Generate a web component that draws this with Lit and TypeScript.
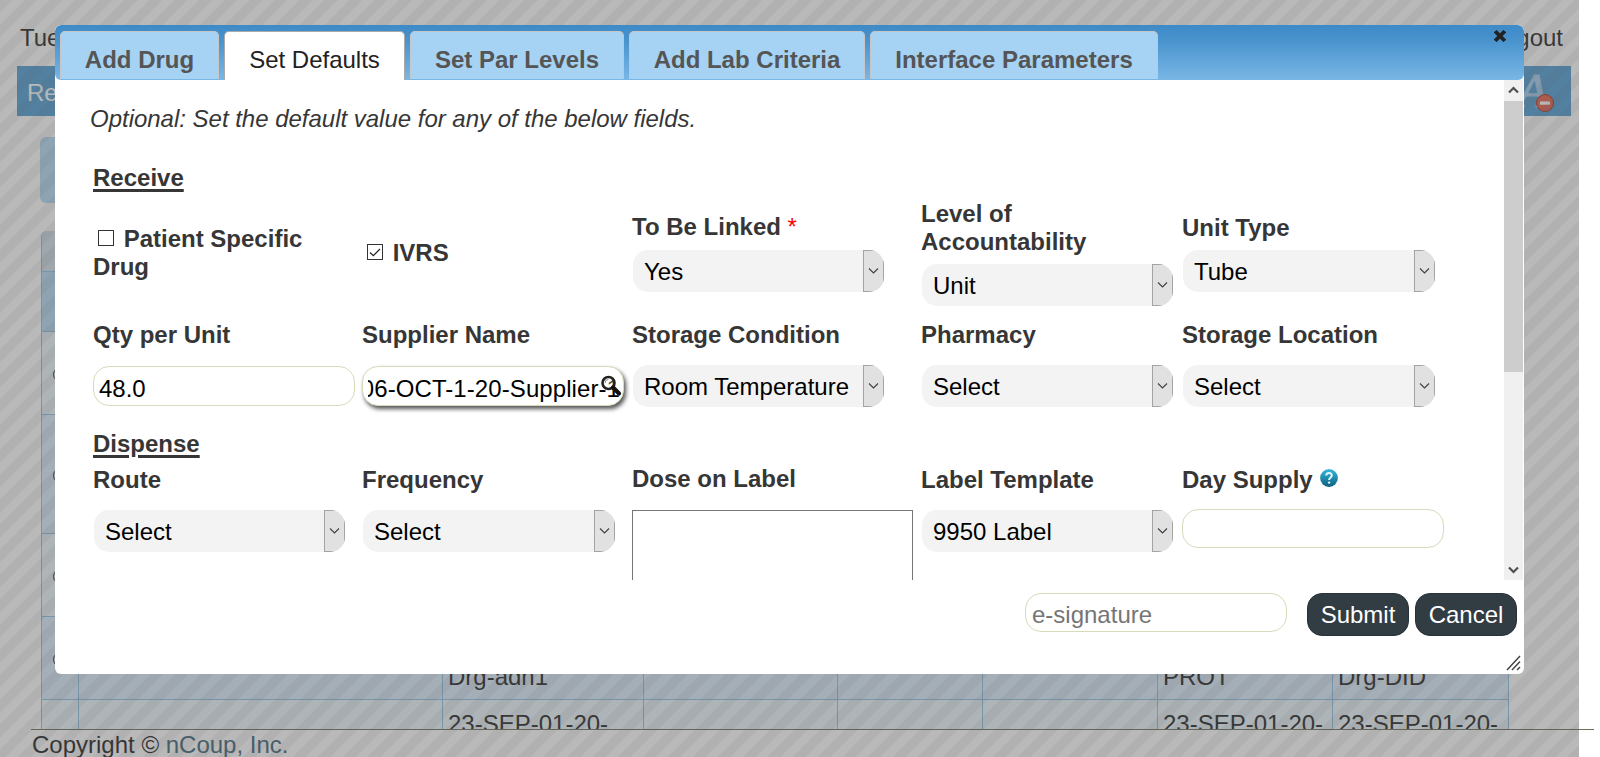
import { LitElement, html, css, svg, nothing } from "lit";
import { customElement, property } from "lit/decorators.js";

type Kind = "select" | "input" | "search" | "area" | "check";

interface Field {
  label: string;
  kind: Kind;
  value?: string;
  cls?: string;
  required?: boolean;
  help?: boolean;
  checked?: boolean;
}

const TABS = [
  { label: "Add Drug", cls: "t1" },
  { label: "Set Defaults", cls: "t2 active" },
  { label: "Set Par Levels", cls: "t3" },
  { label: "Add Lab Criteria", cls: "t4" },
  { label: "Interface Parameters", cls: "t5" },
];

const RECEIVE_TOP: Field[] = [
  { label: "Patient Specific Drug", kind: "check", cls: "patient" },
  { label: "IVRS", kind: "check", checked: true, cls: "ivrs" },
  { label: "To Be Linked", kind: "select", value: "Yes", required: true, cls: "linked" },
  { label: "Level of Accountability", kind: "select", value: "Unit", cls: "level" },
  { label: "Unit Type", kind: "select", value: "Tube", cls: "unit wide" },
];

const RECEIVE_BOTTOM: Field[] = [
  { label: "Qty per Unit", kind: "input", value: "48.0" },
  { label: "Supplier Name", kind: "search", value: "06-OCT-1-20-Supplier-1" },
  { label: "Storage Condition", kind: "select", value: "Room Temperature" },
  { label: "Pharmacy", kind: "select", value: "Select" },
  { label: "Storage Location", kind: "select", value: "Select", cls: "wide" },
];

const DISPENSE: Field[] = [
  { label: "Route", kind: "select", value: "Select" },
  { label: "Frequency", kind: "select", value: "Select", cls: "wide" },
  { label: "Dose on Label", kind: "area", cls: "dose" },
  { label: "Label Template", kind: "select", value: "9950 Label" },
  { label: "Day Supply", kind: "input", value: "", help: true, cls: "supply" },
];

@customElement("form-field")
class FormField extends LitElement {
  @property({ attribute: false }) field!: Field;

  static styles = css`
    :host { display: block; min-width: 0; }
    .label { font-weight: bold; line-height: 28px; color: #363636; }
    .star { color: #f00; font-weight: normal; }
    .control { box-sizing: border-box; margin-top: var(--gap, 16px); color: #000; line-height: 28px; }
    .select {
      display: flex; width: var(--select-width, 251px); height: 42px; margin-left: 1px; border-radius: 15px;
      background: #f3f3f3; overflow: hidden; padding-left: 11px; align-items: center;
      justify-content: space-between; white-space: nowrap;
    }
    .select .text { padding-top: 1px; }
    .drop {
      box-sizing: border-box; width: 21px; height: 42px; border: 1px solid #a3a3a3; flex: none;
      background: #e1e1e1; display: flex; align-items: center; justify-content: center;
    }
    .input {
      width: 262px; height: var(--input-height, 40px); border: 1px solid #d8dabb; border-radius: 16px;
      background: #fff; padding: 8px 6px 0 5px; margin-top: var(--input-gap, 17px);
    }
    .search { position: relative; box-shadow: 2px 3px 4px #555; padding: 8px 5px 0; }
    .clip { display: flex; justify-content: flex-end; overflow: hidden; white-space: nowrap; width: 252px; letter-spacing: .08px; }
    .glass { position: absolute; left: 237px; top: 8px; }
    .area { width: 281px; height: 100px; border: 1px solid #767676; margin-top: 17px; }
    .box { display: inline-block; margin: 0 3px 0 5px; vertical-align: -1px; }
    .box svg, .glass svg, .drop svg { display: block; }
    .box svg { margin-top: -2px; margin-bottom: 2px; }
    .q { vertical-align: 1px; margin-left: 1px; }
  `;

  private renderControl(f: Field) {
    switch (f.kind) {
      case "select":
        return html`<div class="control select">
          <span class="text">${f.value}</span>
          <span class="drop"><svg width="11" height="8" viewBox="0 0 11 8">
            <path d="M1 1.500 5.500 6 10 1.500" fill="none" stroke="#404040" stroke-width="1.100" /></svg></span>
        </div>`;
      case "input":
        return html`<div class="control input">${f.value}</div>`;
      case "search":
        return html`<div class="control input search">
          <div class="clip"><span>${f.value}</span></div>
          <span class="glass"><svg width="22" height="22" viewBox="0 0 22 22">
            <circle cx="8.500" cy="8" r="6" fill="#fff" fill-opacity=".3" stroke="#222" stroke-width="2.600" />
            <path d="M5 8a3.600 3.600 0 0 1 3.500-3.600" fill="none" stroke="#888" />
            <path d="m13 12.500 6 6" stroke="#111" stroke-width="4.200" stroke-linecap="round" /></svg></span>
        </div>`;
      case "area":
        return html`<div class="control area"></div>`;
      default:
        return nothing;
    }
  }

  render() {
    const f = this.field;
    return html`<div class="label">${f.kind === "check"
        ? html`<span class="box"><svg width="16" height="16" viewBox="0 0 16 16">
            <rect x=".5" y=".5" width="15" height="15" fill="#fff" stroke="#333" />
            ${f.checked
              ? svg`<path d="M3 8.500 6.300 11.700 13 5" fill="none" stroke="#222" stroke-width="1.200" />`
              : nothing}</svg></span>&nbsp;`
        : nothing}${f.label}${f.required ? html` <span class="star">*</span>` : nothing}${f.help
        ? html` <svg class="q" width="18" height="18" viewBox="0 0 18 18">
            <defs><linearGradient id="g" x1="0" y1="0" x2="0" y2="1">
              <stop offset="0" stop-color="#35b8dc" /><stop offset="1" stop-color="#0d5f80" /></linearGradient></defs>
            <circle cx="9" cy="9" r="8.900" fill="url(#g)" />
            <path d="M6.200 6.600C6.200 3.300 11.800 3.200 11.800 6.500 11.800 8.700 9.200 8.400 9.100 11" fill="none" stroke="#e4f6fb" stroke-width="2" />
            <circle cx="9.100" cy="13.600" r="1.200" fill="#e4f6fb" /></svg>`
        : nothing}</div>
      ${this.renderControl(f)}`;
  }
}

@customElement("page-behind")
class PageBehind extends LitElement {
  static styles = css`
    :host { display: flex; flex-direction: column; height: 757px; background: #fff; color: #222; overflow: hidden; }
    .top { display: flex; justify-content: space-between; height: 66px; padding: 24px 37px 0 20px; box-sizing: border-box; line-height: 28px; width: 1600px; flex: none; }
    .bar {
      height: 50px; margin: 0 29px 0 17px; background: #519ed4; color: #fff; display: flex; flex: none;
      justify-content: space-between; padding-left: 10px; line-height: 53px; box-sizing: border-box;
    }
    .bar svg { display: block; }
    .actions { height: 66px; flex: none; margin: 21px 90px 0 40px; background: #b7dbf4; border-radius: 6px; }
    .table { margin: 28px 91px 0 41px; flex: 1; min-height: 0; overflow: hidden; border-left: 1px solid #8fc1e4; border-right: 1px solid #8fc1e4; box-sizing: border-box; border-radius: 6px 6px 0 0; }
    .caption { height: 40px; background: #d3e1ea; padding: 7px 0 0 12px; box-sizing: border-box; }
    .head { height: 61px; background: #b7dbf4; border-bottom: 1px solid #8fc1e4; border-top: 1px solid #8fc1e4; box-sizing: border-box; }
    .row { display: grid; grid-template-columns: 37px 364px 201px 194px 145px 175px 175px 1fr; box-sizing: border-box; border-bottom: 1px solid #8fc1e4; background: #ecf7fc; line-height: 28px; }
    .row.alt { background: #dcedfc; }
    .cell { border-right: 1px solid #8fc1e4; box-sizing: border-box; padding-left: 5px; overflow: hidden; display: flex; flex-direction: column; justify-content: flex-end; padding-bottom: 8px; white-space: nowrap; }
    .cell:last-child { border-right: 0; }
    .cell.pick { justify-content: center; padding: 2px 0 0 11px; }
    .last .cell { justify-content: flex-start; padding-top: 10px; }
    .dot { width: 13px; height: 13px; border: 1px solid #222; border-radius: 50%; flex: none; }
    .h83 { height: 83px; } .h119 { height: 119px; }
    .foot { height: 28px; margin-left: 31px; width: 1563px; border-top: 1px solid #6b7058; line-height: 28px; color: #1c1c1c; flex: none; box-sizing: border-box; }
    .foot .copy { display: block; margin: 1px 0 0 1px; }
    .foot a { color: #3d6479; }
  `;

  private row(cls: string, cells: string[]) {
    return html`<div class="row ${cls}">
      <div class="cell pick">${cls.includes("last") ? nothing : html`<span class="dot"></span>`}</div>
      ${cells.map((c) => html`<div class="cell">${c}</div>`)}
    </div>`;
  }

  render() {
    const blank = ["", "", "", "", "", "", ""];
    return html`
      <div class="top"><span>Tue</span><span>gout</span></div>
      <div class="bar"><span>Re</span>
        <svg width="56" height="50" viewBox="0 0 56 50">
          <text x="3" y="40.500" font-family="Liberation Serif, serif" font-style="italic" font-size="48" fill="#a5cdec" stroke="#a5cdec" stroke-width="1.200">A</text>
          <circle cx="30" cy="37" r="8.500" fill="#e4604c" stroke="#a3321f" />
          <rect x="25" y="35.500" width="10" height="3.200" fill="#fff" />
        </svg>
      </div>
      <div class="actions"></div>
      <div class="table">
        <div class="caption">S</div>
        <div class="head"></div>
        ${this.row("h83", blank)}
        ${this.row("h119 alt", blank)}
        ${this.row("h83", blank)}
        ${this.row("h83 alt", ["", "Drg-adn1", "", "", "", "PROT", "Drg-DID"])}
        ${this.row("h83 last", ["", "23-SEP-01-20-", "", "", "", "23-SEP-01-20-", "23-SEP-01-20-"])}
      </div>
      <div class="foot"><span class="copy">Copyright © <a>nCoup, Inc.</a></span></div>
    `;
  }
}

@customElement("app-root")
class AppRoot extends LitElement {
  static styles = css`
    :host { display: block; position: relative; width: 1600px; height: 757px; overflow: hidden; background: #fff; font: 24px/28px "Liberation Sans", Arial, sans-serif; color: #363636; }
    .veil {
      position: absolute; left: 0; top: 0; width: 1579px; height: 757px;
      background: repeating-linear-gradient(135deg, rgba(85,85,85,.46) 0, rgba(85,85,85,.46) 8.34px, rgba(85,85,85,.41) 9.34px, rgba(85,85,85,.41) 17.18px, rgba(85,85,85,.46) 17.678px);
    }
    .dialog { position: absolute; left: 55px; top: 25px; width: 1469px; height: 649px; background: #fff; border-radius: 6px; overflow: hidden; display: flex; flex-direction: column; }
    .tabs { display: flex; gap: 5px; height: 55px; flex: none; box-sizing: border-box; padding: 6px 0 0 5px; background: linear-gradient(#3d8ac7, #4a94ce 30%, #79b7e5); border-radius: 6px; }
    .tab { box-sizing: border-box; height: 48px; border: 1px solid #c9c5c5; border-bottom: 0; border-radius: 5px 5px 0 0; background: #a6d2f4; color: #555; font-weight: bold; text-align: center; padding-top: 14px; white-space: nowrap; }
    .tab.active { height: 49px; background: #fff; color: #222; font-weight: normal; border-color: #aaa; }
    .t1 { width: 159px; } .t2 { width: 181px; } .t3 { width: 214px; } .t4 { width: 236px; } .t5 { width: 288px; }
    .close { margin: -1px 18px 0 auto; }
    .close svg { display: block; }
    .pane { display: flex; height: 500px; flex: none; overflow: hidden; }
    .form { width: 1449px; box-sizing: border-box; padding: 25px 0 0 38px; overflow: hidden; }
    .note { font-style: italic; margin-left: -3px; letter-spacing: -.015px; }
    .section { font-weight: bold; text-decoration: underline; text-decoration-thickness: 3px; text-underline-offset: 3px; }
    .receive { margin-top: 31px; }
    .grid { display: grid; grid-template-columns: 269px 270px 289px 261px 280px; }
    .g1 { height: 115px; }
    .g2 { height: 123px; padding-top: 14px; box-sizing: border-box; }
    .g3 { padding-top: 8px; }
    .patient { padding: 33px 40px 0 0; }
    .ivrs { padding-top: 47px; }
    .linked { padding-top: 21px; --gap: 9px; }
    .level { padding: 8px 60px 0 0; --gap: 8px; }
    .unit { padding-top: 22px; --gap: 8px; }
    .wide { --select-width: 252px; }
    .dose { margin-top: -1px; }
    .supply { --input-gap: 15px; --input-height: 39px; }
    .scroll { width: 19px; background: #f0f0f0; display: flex; flex-direction: column; justify-content: space-between; }
    .scroll svg { display: block; }
    .thumb { height: 271px; background: #cdcdcd; margin-bottom: auto; }
    .actions { display: flex; padding: 13px 7px 0 0; justify-content: flex-end; align-items: flex-start; position: relative; flex: 1; }
    .sign { box-sizing: border-box; width: 262px; height: 39px; border: 1px solid #d8dabb; border-radius: 16px; color: #757575; padding: 7px 6px 0; margin-right: 20px; }
    .btn { box-sizing: border-box; width: 102px; height: 43px; border: 1px solid #27323a; border-radius: 15px; background: #323c43; color: #fff; text-align: center; line-height: 42px; }
    .btn + .btn { margin-left: 6px; }
    .grip { position: absolute; right: 3px; bottom: 3px; }
  `;

  private fields(list: Field[], cls: string) {
    return html`<div class="grid ${cls}">
      ${list.map((f) => html`<form-field class=${f.cls ?? ""} .field=${f}></form-field>`)}
    </div>`;
  }

  render() {
    return html`
      <page-behind></page-behind>
      <div class="veil"></div>
      <div class="dialog">
        <div class="tabs">
          ${TABS.map((t) => html`<div class="tab ${t.cls}">${t.label}</div>`)}
          <span class="close"><svg width="12" height="12" viewBox="0 0 12 12"><path d="M2.500 2.500l7 7M9.500 2.500l-7 7" stroke="#222" stroke-width="3.800" stroke-linecap="square" /></svg></span>
        </div>
        <div class="pane">
          <div class="form">
            <div class="note">Optional: Set the default value for any of the below fields.</div>
            <div class="section receive">Receive</div>
            ${this.fields(RECEIVE_TOP, "g1")}
            ${this.fields(RECEIVE_BOTTOM, "g2")}
            <div class="section">Dispense</div>
            ${this.fields(DISPENSE, "g3")}
          </div>
          <div class="scroll">
            <svg width="19" height="21" viewBox="0 0 19 21"><path d="M5 12.500 9.500 8 14 12.500" fill="none" stroke="#505050" stroke-width="2.200" /></svg>
            <div class="thumb"></div>
            <svg width="19" height="21" viewBox="0 0 19 21"><path d="M5 8.500 9.500 13 14 8.500" fill="none" stroke="#505050" stroke-width="2.200" /></svg>
          </div>
        </div>
        <div class="actions">
          <div class="sign">e-signature</div>
          <div class="btn">Submit</div>
          <div class="btn">Cancel</div>
          <svg class="grip" width="15" height="16" viewBox="0 0 15 16"><path d="M1 15 14 1M6 15l8-8.500M11 15l3-3" stroke="#444" stroke-width="1.500" fill="none" /></svg>
        </div>
      </div>
    `;
  }
}
